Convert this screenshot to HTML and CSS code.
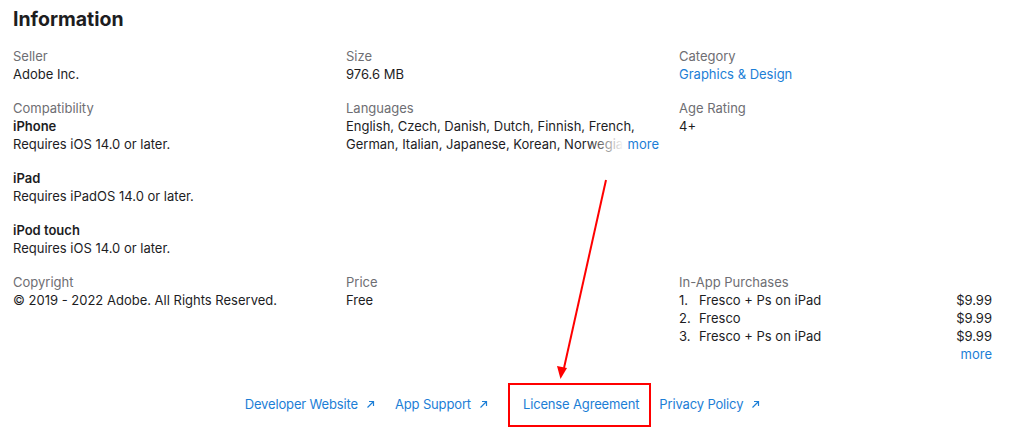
FILE: index.html
```html
<!DOCTYPE html>
<html lang="en">
<head>
<meta charset="utf-8">
<title>Information</title>
<link rel="stylesheet" href="styles.css">
</head>
<body>
<section class="info">
  <h2 class="title">Information</h2>
  <div class="grid">
    <dl class="item">
      <dt class="label">Seller</dt>
      <dd class="value">Adobe Inc.</dd>
    </dl>
    <dl class="item">
      <dt class="label">Size</dt>
      <dd class="value">976.6 MB</dd>
    </dl>
    <dl class="item">
      <dt class="label">Category</dt>
      <dd class="value"><a class="link" href="#">Graphics &amp; Design</a></dd>
    </dl>

    <dl class="item">
      <dt class="label">Compatibility</dt>
      <dd class="value">
        <div class="device"><div class="device-name">iPhone</div><div>Requires iOS 14.0 or later.</div></div>
        <div class="device"><div class="device-name">iPad</div><div>Requires iPadOS 14.0 or later.</div></div>
        <div class="device"><div class="device-name">iPod touch</div><div>Requires iOS 14.0 or later.</div></div>
      </dd>
    </dl>
    <dl class="item">
      <dt class="label">Languages</dt>
      <dd class="value clamp">
        <p class="clamp-text">English, Czech, Danish, Dutch, Finnish, French, German, Italian, Japanese, Korean, Norwegian Bokmål, Polish, Portuguese, Russian, Simplified Chinese, Spanish, Swedish, Traditional Chinese, Turkish</p>
        <span class="more-wrap"><a class="link" href="#">more</a></span>
      </dd>
    </dl>
    <dl class="item">
      <dt class="label">Age Rating</dt>
      <dd class="value">4+</dd>
    </dl>

    <dl class="item">
      <dt class="label">Copyright</dt>
      <dd class="value">© 2019 - 2022 Adobe. All Rights Reserved.</dd>
    </dl>
    <dl class="item">
      <dt class="label">Price</dt>
      <dd class="value">Free</dd>
    </dl>
    <dl class="item">
      <dt class="label">In-App Purchases</dt>
      <dd class="value">
        <ol class="iap-list">
          <li class="iap-row"><span class="iap-name"><span class="num">1.</span>Fresco + Ps on iPad</span><span>$9.99</span></li>
          <li class="iap-row"><span class="iap-name"><span class="num">2.</span>Fresco</span><span>$9.99</span></li>
          <li class="iap-row"><span class="iap-name"><span class="num">3.</span>Fresco + Ps on iPad</span><span>$9.99</span></li>
        </ol>
        <div class="iap-more"><a class="link" href="#">more</a></div>
      </dd>
    </dl>
  </div>
  <nav class="links">
    <a class="link ext" href="#">Developer Website<svg class="arr" width="9" height="9" viewBox="0 0 9 9"><path d="M1.5 7.5 L7.5 1.5 M3 1.5 H7.5 V6" fill="none" stroke="currentColor" stroke-width="1.2"/></svg></a>
    <a class="link ext" href="#">App Support<svg class="arr" width="9" height="9" viewBox="0 0 9 9"><path d="M1.5 7.5 L7.5 1.5 M3 1.5 H7.5 V6" fill="none" stroke="currentColor" stroke-width="1.2"/></svg></a>
    <a class="link ext license" href="#">License Agreement</a>
    <a class="link ext" href="#">Privacy Policy<svg class="arr" width="9" height="9" viewBox="0 0 9 9"><path d="M1.5 7.5 L7.5 1.5 M3 1.5 H7.5 V6" fill="none" stroke="currentColor" stroke-width="1.2"/></svg></a>
  </nav>
</section>
<div class="annot-box"></div>
<svg class="annot-arrow" width="1022" height="434" viewBox="0 0 1022 434">
  <line x1="606" y1="180" x2="564" y2="368" stroke="#ff0000" stroke-width="2"/>
  <polygon points="560.5,379 557,366 567,368" fill="#ff0000"/>
</svg>
</body>
</html>
```

FILE: styles.css
```css
* { box-sizing: border-box; }
html, body { margin: 0; padding: 0; background: #fff; }
body {
  font-family: Inter, "Noto Sans", "Liberation Sans", sans-serif;
  font-size: 13px;
  line-height: 18px;
  color: #1d1d1f;
  width: 1022px;
  height: 434px;
  overflow: hidden;
  position: relative;
}
.info { padding: 7px 30px 0 13px; }
.title {
  margin: 0 0 16px;
  font-size: 19.5px;
  line-height: 24px;
  font-weight: 700;
  color: #1d1d1f;
}
.grid {
  display: grid;
  grid-template-columns: 313px 313px 313px;
  column-gap: 20px;
  row-gap: 16px;
  align-items: start;
}
.item { margin: 0; }
.label { color: #6e6e73; }
.value { margin: 0; color: #1d1d1f; }
.device { margin-bottom: 16px; }
.device:last-child { margin-bottom: 0; }
.device-name { font-weight: 600; }
.link { color: #1c7ed6; text-decoration: none; }
.clamp { position: relative; }
.clamp-text {
  margin: 0;
  height: 36px;
  overflow: hidden;
}
.more-wrap {
  position: absolute;
  right: 0;
  bottom: 0;
  padding-left: 40px;
  background: linear-gradient(to right, rgba(255,255,255,0) 0, #fff 36px);
}
.iap-list { list-style: none; margin: 0; padding: 0; }
.iap-row { display: flex; justify-content: space-between; }
.num { display: inline-block; width: 20px; }
.iap-more { text-align: right; }
.links {
  display: flex;
  justify-content: center;
  gap: 20px;
  margin-top: 32px;
  letter-spacing: -0.15px;
}
.ext { white-space: nowrap; display: inline-flex; align-items: center; }
.arr { margin-left: 8px; }
.license { margin-left: 15px; }
.annot-box {
  position: absolute;
  left: 508px;
  top: 383px;
  width: 143px;
  height: 44px;
  border: 2px solid #ff0000;
}
.annot-arrow { position: absolute; left: 0; top: 0; pointer-events: none; }
```
